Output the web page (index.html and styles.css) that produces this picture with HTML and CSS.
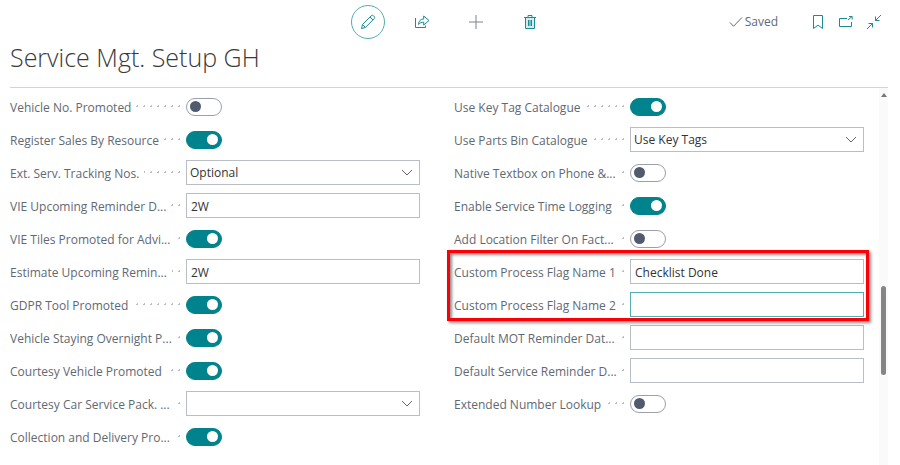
FILE: index.html
```html
<!DOCTYPE html>
<html lang="en">
<head>
<meta charset="utf-8">
<title>Service Mgt. Setup GH</title>
<link rel="stylesheet" href="styles.css">
</head>
<body>
<div class="page">
  <header class="toolbar">
    <div class="actions">
      <button class="action action-edit" type="button" aria-label="Edit">
        <svg class="icon" viewBox="0 0 16 16"><path d="M1.500 14.600l1-4.100L11.200 1.800a1.600 1.600 0 0 1 2.300 0l.6.6a1.600 1.600 0 0 1 0 2.300L5.500 13.400zM10 3l3 3M2.600 10.600l2.800 2.800"/></svg>
      </button>
      <button class="action" type="button" aria-label="Share">
        <svg class="icon" viewBox="0 0 16 16"><path d="M1.500 4v9.500h10v-2M4.500 10.500c.2-3.600 2-5.500 5.200-5.500V2L15 6.500 9.700 11V8.200c-2.200 0-3.700.6-5.200 2.300z"/></svg>
      </button>
      <button class="action action-new" type="button" aria-label="New">
        <svg class="icon" viewBox="0 0 16 16"><path d="M8 1v14M1 8h14"/></svg>
      </button>
      <button class="action" type="button" aria-label="Delete">
        <svg class="icon" viewBox="0 0 16 16"><path d="M3.500 3.500h9v11h-9z" fill="#d5ecee"/><path d="M2 3.500h12M6 3V1.500h4V3M6.500 6v6M8 6v6M9.500 6v6"/></svg>
      </button>
    </div>
    <div class="status">
      <span class="saved"><svg class="check" viewBox="0 0 14 12"><path d="M1 6.500l3.500 3.800L13 1.500"/></svg>Saved</span>
      <button class="tool" type="button" aria-label="Bookmark">
        <svg class="icon" viewBox="0 0 16 16"><path d="M3.500 1.500h9v13L8 11.200l-4.500 3.300z"/></svg>
      </button>
      <button class="tool" type="button" aria-label="Open in new window">
        <svg class="icon" viewBox="0 0 16 16"><path d="M9 4.500H1.500v8h12V8M10 6l4-3.500M11 2.500h3.200v3"/></svg>
      </button>
      <button class="tool" type="button" aria-label="Collapse">
        <svg class="icon" viewBox="0 0 16 16"><path d="M15 1L9.500 6.500M9.500 2.500v4h4M1 15l5.500-5.500M2.500 9.500h4v4"/></svg>
      </button>
    </div>
  </header>
  <h1 class="title">Service Mgt. Setup GH</h1>
  <main class="content">
    <form class="fields">
      <div class="column">
        <div class="row"><div class="leader"><label for="f1">Vehicle No. Promoted</label></div><input class="toggle" id="f1" type="checkbox"></div>
        <div class="row"><div class="leader"><label for="f2">Register Sales By Resource</label></div><input class="toggle" id="f2" type="checkbox" checked></div>
        <div class="row"><div class="leader"><label for="f3">Ext. Serv. Tracking Nos.</label></div><div class="dropdown"><select id="f3"><option>Optional</option></select><svg class="chevron" viewBox="0 0 12 8"><path d="M1 1l5 5 5-5"/></svg></div></div>
        <div class="row"><div class="leader"><label for="f4">VIE Upcoming Reminder D...</label></div><input class="box" id="f4" type="text" value="2W"></div>
        <div class="row"><div class="leader"><label for="f5">VIE Tiles Promoted for Advi...</label></div><input class="toggle" id="f5" type="checkbox" checked></div>
        <div class="row"><div class="leader"><label for="f6">Estimate Upcoming Remin...</label></div><input class="box" id="f6" type="text" value="2W"></div>
        <div class="row"><div class="leader"><label for="f7">GDPR Tool Promoted</label></div><input class="toggle" id="f7" type="checkbox" checked></div>
        <div class="row"><div class="leader"><label for="f8">Vehicle Staying Overnight P...</label></div><input class="toggle" id="f8" type="checkbox" checked></div>
        <div class="row"><div class="leader"><label for="f9">Courtesy Vehicle Promoted</label></div><input class="toggle" id="f9" type="checkbox" checked></div>
        <div class="row"><div class="leader"><label for="f10">Courtesy Car Service Pack. ...</label></div><div class="dropdown"><select id="f10"><option></option></select><svg class="chevron" viewBox="0 0 12 8"><path d="M1 1l5 5 5-5"/></svg></div></div>
        <div class="row"><div class="leader"><label for="f11">Collection and Delivery Pro...</label></div><input class="toggle" id="f11" type="checkbox" checked></div>
      </div>
      <div class="column">
        <div class="row"><div class="leader"><label for="g1">Use Key Tag Catalogue</label></div><input class="toggle" id="g1" type="checkbox" checked></div>
        <div class="row"><div class="leader"><label for="g2">Use Parts Bin Catalogue</label></div><div class="dropdown"><select id="g2"><option>Use Key Tags</option></select><svg class="chevron" viewBox="0 0 12 8"><path d="M1 1l5 5 5-5"/></svg></div></div>
        <div class="row"><div class="leader"><label for="g3">Native Textbox on Phone &amp;...</label></div><input class="toggle" id="g3" type="checkbox"></div>
        <div class="row"><div class="leader"><label for="g4">Enable Service Time Logging</label></div><input class="toggle" id="g4" type="checkbox" checked></div>
        <div class="row"><div class="leader"><label for="g5">Add Location Filter On Fact...</label></div><input class="toggle" id="g5" type="checkbox"></div>
        <div class="highlight">
          <div class="row"><div class="leader"><label for="g6">Custom Process Flag Name 1</label></div><input class="box" id="g6" type="text" value="Checklist Done"></div>
          <div class="row"><div class="leader"><label for="g7">Custom Process Flag Name 2</label></div><input class="box box-active" id="g7" type="text"></div>
        </div>
        <div class="row"><div class="leader"><label for="g8">Default MOT Reminder Dat...</label></div><input class="box" id="g8" type="text"></div>
        <div class="row"><div class="leader"><label for="g9">Default Service Reminder D...</label></div><input class="box" id="g9" type="text"></div>
        <div class="row"><div class="leader"><label for="g10">Extended Number Lookup</label></div><input class="toggle" id="g10" type="checkbox"></div>
      </div>
    </form>
    <div class="scrollbar">
      <svg class="scroll-up" viewBox="0 0 6 4"><path d="M3 0l3 4H0z"/></svg>
      <div class="thumb"></div>
    </div>
  </main>
</div>
</body>
</html>
```

FILE: styles.css
```css
* { box-sizing: border-box; }

body {
  margin: 0;
  background: #fff;
  color: #333;
  font: 12px/20px "Open Sans", "Noto Sans", sans-serif;
}

.page {
  display: flex;
  flex-direction: column;
  min-height: 100vh;
  padding: 0 12px 0 10px;
}

.toolbar {
  display: grid;
  grid-template-columns: 1fr auto 1fr;
  align-items: center;
  height: 43px;
  padding: 0 6px;
}

.actions {
  display: flex;
  gap: 20px;
  grid-column: 2;
}

.action, .tool {
  display: flex;
  align-items: center;
  justify-content: center;
  padding: 0;
  border: 0;
  background: none;
  color: #1b8b93;
}

.action { width: 34px; height: 34px; }
.action-edit { border: 1px solid #55adb3; border-radius: 50%; }
.action-new { color: #7c828e; }
.tool { width: 16px; height: 16px; }

.icon { width: 16px; height: 16px; }
.icon, .check, .chevron { fill: none; stroke: currentColor; }

.status {
  display: flex;
  align-items: center;
  justify-content: flex-end;
  gap: 12px;
}

.saved {
  display: flex;
  align-items: center;
  gap: 2px;
  margin-right: 20px;
  color: #5f6877;
}

.check { width: 14px; height: 12px; }

.title {
  margin: 0;
  height: 45px;
  border-bottom: 1px solid #d3d4da;
  color: #3a3a3a;
  font-family: "Open Sans", "Noto Sans", sans-serif;
  font-size: 25px;
  font-weight: 300;
  line-height: 28px;
}

.content {
  display: flex;
  flex: 1;
}

.fields {
  display: grid;
  flex: 1;
  grid-template-columns: 1fr 1fr;
  gap: 34px;
  padding: 2px 15px 12px 0;
}

.row {
  display: grid;
  grid-template-columns: 176px 1fr;
  align-items: center;
  height: 33px;
}

.leader {
  margin-right: 3px;
  padding-top: 2px;
  background: radial-gradient(circle, #b8bcc3 1px, transparent 1px) right center / 7px 7px repeat-x;
}

.leader label {
  display: inline-block;
  padding-right: 5px;
  background: #fff;
  color: #5f6973;
  white-space: nowrap;
}

.box, .dropdown select {
  width: 100%;
  height: 25px;
  padding: 1px 4px 0;
  border: 1px solid #b9bdc5;
  border-radius: 0;
  outline: 0;
  background: #fff;
  color: #333;
  font: inherit;
}

.box-active { border-color: #55adb3; }

.dropdown { display: grid; align-items: center; }
.dropdown select { grid-area: 1 / 1; appearance: none; padding: 1px 3px 0; }

.chevron {
  grid-area: 1 / 1;
  justify-self: end;
  width: 12px;
  height: 8px;
  margin-right: 7px;
  color: #666;
  pointer-events: none;
}

.toggle {
  appearance: none;
  display: flex;
  align-items: center;
  width: 36px;
  height: 18px;
  margin: 0;
  padding: 0 3px;
  border: 1px solid #9a9faa;
  border-radius: 9px;
  background: #fff;
}

.toggle::before {
  content: "";
  width: 11px;
  height: 11px;
  border-radius: 50%;
  background: #505c6d;
}

.toggle:checked {
  justify-content: flex-end;
  border-color: #00838c;
  background: #00838c;
}

.toggle:checked::before { background: #fff; }

.highlight { position: relative; }

.highlight::after {
  content: "";
  position: absolute;
  inset: -5px -5px 0 -7px;
  border: 3px solid #fb0007;
  box-shadow: 2px 2px 3px rgba(0, 0, 0, .45), inset 2px 2px 3px rgba(0, 0, 0, .45);
  pointer-events: none;
}

.scrollbar {
  display: flex;
  flex-direction: column;
  align-items: center;
  width: 9px;
  background: #fafafa;
}

.scroll-up {
  width: 6px;
  height: 4px;
  margin-top: 5px;
  fill: #777;
}

.thumb {
  width: 5px;
  height: 89px;
  margin-top: 189px;
  border-radius: 3px;
  background: #858585;
}
```
